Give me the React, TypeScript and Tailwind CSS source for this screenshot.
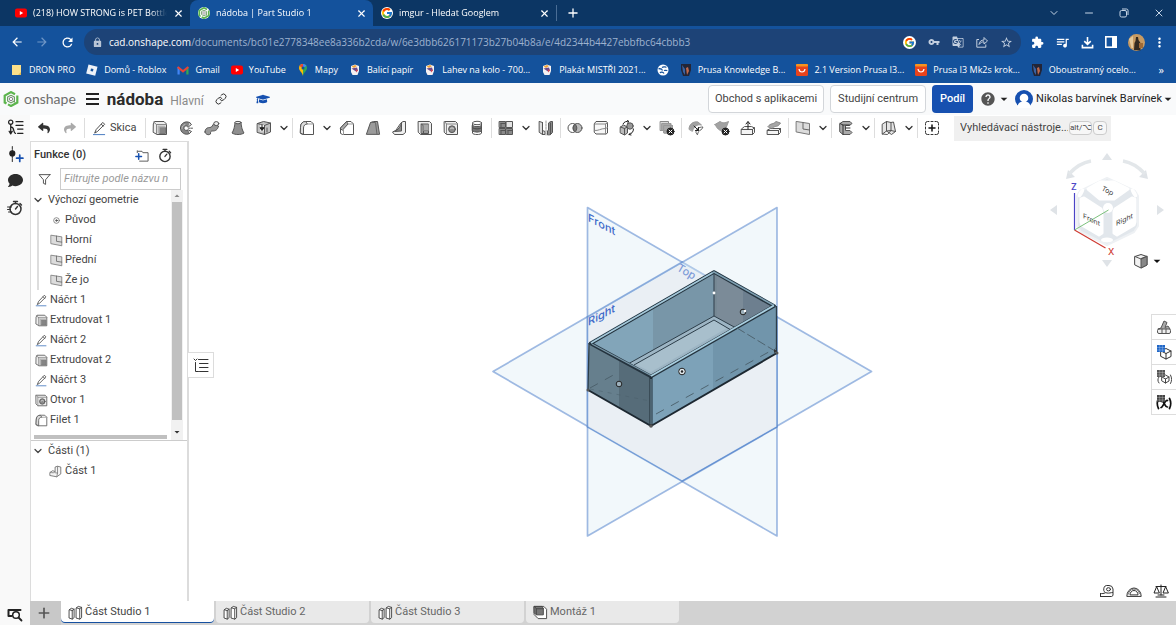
import React from "react";
import { FcGoogle } from "react-icons/fc";
import { FaYoutube, FaGraduationCap, FaReply, FaShare, FaComment } from "react-icons/fa";
import {
  MdArrowBack, MdArrowForward, MdRefresh, MdLock, MdStarBorder, MdVpnKey, MdGTranslate,
  MdExtension, MdQueueMusic, MdMoreVert, MdHelp, MdArrowDropDown,
} from "react-icons/md";
import { FiFilter } from "react-icons/fi";
import { ChevronDown, Link, Plus, X, Minus } from "lucide-react";

type Kids = { children?: React.ReactNode };

/* ---------- icon primitives ---------- */

function Glyph({ children, className = "size-4" }: Kids & { className?: string }) {
  return (
    <svg viewBox="0 0 16 16" className={`${className} shrink-0`} fill="none" stroke="#555" strokeWidth="1" strokeLinejoin="round" strokeLinecap="round" aria-hidden="true">
      {children}
    </svg>
  );
}

const G = "#a9a9a9";
const L = "#dcdcdc";

const Extrude = ({ className }: { className?: string }) => (
  <Glyph className={className}>
    <path d="M1.500 3.500l1-2h9.500l2.500 2.500v10.500h-9.500l-3.500-2z" fill="#eee" />
    <path d="M1.500 2l3 2.500M4.500 4.500h10M4.500 4.500v10" stroke="#888" />
    <path d="M7.500 7.500h6v6h-6z" fill="#858585" stroke="#777" />
    <path d="M5.500 5.500h8v2h-6v6h-2z" fill="#b5b5b5" stroke="none" />
  </Glyph>
);
const Revolve = () => (
  <Glyph>
    <path d="M11.500 2.500a6.200 6.200 0 1 0 0 11l-2-3.500a2.300 2.300 0 1 1 0-3.800z" fill="#858585" />
    <path d="M11.500 2.500l2 2-3.500 2.700M11.500 13.500l2-2-3.500-1.800" fill={L} />
    <path d="M10.500 8.200h4.500" strokeDasharray="1.500 1" />
    <path d="M7 4.500c-2 .5-3 2-3 4" stroke="#bbb" />
  </Glyph>
);
const Sweep = () => (
  <Glyph>
    <path d="M1 12c0-4 3-4.500 5-4.500S8.500 5 10 3.500l4.500 2.500c-1 4-3 5-6 5-2 0-2 1-2 3-2 1.500-5 .5-5.500-2z" fill="#999" />
    <ellipse cx="12.300" cy="3.600" rx="2.500" ry="2" fill="#eee" />
  </Glyph>
);
const Loft = () => (
  <Glyph>
    <path d="M5 2.500C4.500 8 3.500 10.500 2 13c3 2 9 2 12 0-1.500-2.500-2.500-5-3-10.500z" fill="#8f8f8f" />
    <ellipse cx="8" cy="2.600" rx="3" ry="1.200" fill="#eee" />
  </Glyph>
);
const Thicken = () => (
  <Glyph>
    <path d="M1.500 3.500l6-2 7 1.500v9l-6 2.500-7-2z" fill="#c2c2c2" />
    <path d="M1.500 3.500l7 2v9M8.500 5.500l6-2.500M11 8v4" />
    <path d="M4 4.800h4v6.500H4z" fill="#eee" stroke="none" />
    <path d="M6 5v4.500M4.200 8L6 10.500 7.800 8z" stroke="#222" fill="#222" />
  </Glyph>
);
const Fillet = ({ className }: { className?: string }) => (
  <Glyph className={className}>
    <path d="M1.500 13V7c0-3.500 2-5.500 5-5.500h5.500l2.500 2.500v10.500H4z" fill="#fff" />
    <path d="M1.500 7c0-3.500 2-5.500 5-5.500l2 2.500C6 4 4.500 5.500 4.500 8v6.500l-3-1.500z" fill={L} />
    <path d="M8.500 4h6" stroke="#999" />
  </Glyph>
);
const Chamfer = () => (
  <Glyph>
    <path d="M1.500 13V8l6-6.500h4.500l2.500 2.500v10.500H4z" fill="#fff" />
    <path d="M1.500 8l6-6.500L9 4 4.500 9l-1 1z" fill={G} />
    <path d="M9 4h5.500M4.500 9v5.500" stroke="#999" />
  </Glyph>
);
const Draft = () => (
  <Glyph>
    <path d="M1.500 14l4-11.500 3-1h4L14.500 14z" fill="#9b9b9b" />
    <path d="M5.500 2.500h5L12 14.500" stroke="#666" />
  </Glyph>
);
const Rib = () => (
  <Glyph>
    <path d="M10 3l2-1.500h2.500v11L12 14.500H3.500L1.500 12l3-1.500z" fill="#eee" />
    <path d="M10.500 3v8l-7 .5C7 10 9.500 7 10.500 3z" fill="#8a8a8a" />
  </Glyph>
);
const Shell = () => (
  <Glyph>
    <path d="M1.500 1.500h11l2 2v11h-11l-2-2z" fill="#eee" />
    <path d="M4.500 4h7v9.500h-7z" fill="#999" />
    <path d="M4.500 4l2 2v7" />
    <path d="M6.500 4.500h5v6h-5z" fill={G} stroke="#888" />
  </Glyph>
);
const Hole = ({ className }: { className?: string }) => (
  <Glyph className={className}>
    <path d="M1.500 1.500h11l2 2v11h-11l-2-2z" fill="#eee" />
    <path d="M1.500 1.500l2 2.500h11M3.500 4v10.500" stroke="#888" />
    <circle cx="9" cy="9.200" r="3.400" fill="#8b8b8b" />
    <path d="M7.500 8.500a2 2 0 0 1 3 0" stroke="#ddd" />
  </Glyph>
);
const Thread = () => (
  <Glyph>
    <path d="M3.500 3v10c0 2 9 2 9 0V3" fill="#fff" />
    <path d="M3.500 5.500c2 1.500 7 1.500 9 0v5.500c-2 1.500-7 1.500-9 0z" fill="#777" />
    <ellipse cx="8" cy="3" rx="4.500" ry="1.700" fill="#fff" />
    <path d="M4 8c2 1.300 6 1.300 8 0" stroke="#444" />
  </Glyph>
);
const Pattern = () => (
  <Glyph>
    <path d="M1.500 1.500h6v6h-6zM1.500 8.500h6v6h-6zM8.500 8.500h6v6h-6z" fill="#8a8a8a" />
    <path d="M8.500 1.500h6v6h-6z" fill="#e3e3e3" />
    <path d="M3 3.500h4.500M3 10.500h4.500M10 10.500h4.500M3 3.500v4M3 10.500v4M10 10.500v4" stroke="#555" />
  </Glyph>
);
const Mirror = () => (
  <Glyph>
    <path d="M1.500 1.500l3 1v8l2.500 1v3H4.500l-3-2z" fill={L} />
    <path d="M9.500 14.500V11l1-1V3l2-1.500h2v11l-2 2z" fill="#8a8a8a" />
    <path d="M4.500 2.500v12M12.500 3v11.500" />
    <path d="M8 1v14" stroke="#999" strokeDasharray="2 1" />
  </Glyph>
);
const BooleanIcon = () => (
  <Glyph>
    <circle cx="5.500" cy="8" r="4.500" fill="#fff" />
    <circle cx="10.500" cy="8" r="4.500" fill="#bbb" />
    <path d="M8 4.300a4.500 4.500 0 0 1 0 7.400 4.500 4.500 0 0 1 0-7.400z" fill="#777" />
  </Glyph>
);
const Split = () => (
  <Glyph>
    <path d="M1.500 3.500l1.500-2h10.500l1 1.500v10l-1.500 1H3l-1.500-1.500z" fill="#f8f8f8" />
    <path d="M2 4h10.500l2-1M12.500 4v10M1.500 10.500c4 .5 6-2 11-2l2-1" stroke="#888" />
  </Glyph>
);
const Transform = () => (
  <Glyph>
    <path d="M1.500 7l3-2 4 2v6l-3 2-4-2z" fill="#bbb" />
    <path d="M1.500 7l4 1.500v6M5.500 8.500l3-1.500" />
    <circle cx="11" cy="6" r="3.200" fill="#999" />
    <path d="M4 4C5 1.500 8 1 9.500 1.500M8.500.5l1.500 1-1.500 1.500M14.500 9c0 3-2 5-4.500 5.500M11.500 13l-1.500 1.500 2 .5" stroke="#222" />
  </Glyph>
);
const Cross = () => (
  <>
    <circle cx="11.500" cy="11.500" r="3.500" fill="#222" stroke="#222" />
    <path d="M10 10l3 3M13 10l-3 3" stroke="#fff" />
  </>
);
const DeletePart = () => (
  <Glyph>
    <path d="M1.500 1.500h8v2H12v2h1.500V13H5v-2.500H1.500z" fill={L} stroke="#888" />
    <path d="M3 3.500h8.500v7H3zM5 5.500h8.500V13H5z" fill={G} stroke="#999" />
    <Cross />
  </Glyph>
);
const MoveFace = () => (
  <Glyph>
    <path d="M1 9c0-4.500 4-8 9-7l3.500 3C9 4 6 6.500 4.500 11z" fill="#a2a2a2" stroke="#999" />
    <path d="M8 12c0-3 2.500-5 7-5l-1.500 2.500C11 10.500 10 12 9.500 14.500z" fill="#fff" stroke="#666" />
    <path d="M6 6l4.500 4.500M10.500 7.500v3H7.500" stroke="#222" />
  </Glyph>
);
const DeleteFace = () => (
  <Glyph>
    <path d="M1 4.500l5-3c3 2 5 1.500 8.500 0L12 8 9 11C5 11 3 8 1 4.500z" fill="#a2a2a2" stroke="#999" />
    <Cross />
  </Glyph>
);
const MoveUp = () => (
  <Glyph>
    <path d="M1.500 9l3-2.500h7L14.500 8v4.500l-2 2h-11z" fill="#f4f4f4" />
    <path d="M1.500 9.500h11l2-2M12.500 9.500v5" />
    <path d="M8 9V2M6 4l2-2.500L10 4" stroke="#222" />
  </Glyph>
);
const Replace = () => (
  <Glyph>
    <path d="M1.500 10l3-1.500h10v4l-2 2h-11z" fill="#f4f4f4" />
    <path d="M1.500 10.500h11l2-2M12.500 10.500v4" />
    <path d="M2 6.500c3-4 5-1.500 8-5l4.500 1.500c-3 5-5 2-8 5z" fill="#a6a6a6" stroke="#888" />
  </Glyph>
);
const PlaneIcon = ({ className }: { className?: string }) => (
  <Glyph className={className}>
    <path d="M1.500 1.500l13 2v11l-13-2.500z" fill={L} stroke="#777" />
    <path d="M8 2.500v6.500l6.500 1" stroke="#666" />
  </Glyph>
);
const Frame = () => (
  <Glyph>
    <path d="M2 3.500L5 1.500h7l2 2-2.500 2H7.500v5H12l2 2-2 2H5L2 12z" fill="#aaa" />
    <path d="M2 3.500l3 1.500v9.500M5 5h6.500M7.500 8h4.500" stroke="#333" />
  </Glyph>
);
const Sheet = () => (
  <Glyph>
    <path d="M1.500 4l4-2.500v9.500l-4 3zM5.500 1.500L10 2.500v8l-4.500.5M10 2.500l2.500-.5 2 9.500-4 3-5-3.500" fill="#e4e4e4" />
    <path d="M10 10.500l4.500 1M1.500 14l5 .5 3.500-4" />
  </Glyph>
);
const AddTool = () => (
  <Glyph>
    <path d="M1.500 5V3.500a2 2 0 0 1 2-2H5M11 1.500h1.500a2 2 0 0 1 2 2V5M14.500 11v1.500a2 2 0 0 1-2 2H11M5 14.500H3.500a2 2 0 0 1-2-2V11M7 1.500h2M7 14.500h2M1.500 7v2M14.500 7v2" stroke="#333" />
    <path d="M8 5v6M5 8h6" stroke="#111" strokeWidth="1.500" />
  </Glyph>
);
const Pencil = ({ className }: { className?: string }) => (
  <Glyph className={className}>
    <path d="M3 12.500l1.500-3.500 7-7.500 2 2-7.500 7.500zM10 3.500l2 2" stroke="#444" />
    <path d="M1.500 14.500h12" stroke="#3f74bd" />
  </Glyph>
);
const PartTab = ({ className }: { className?: string }) => (
  <Glyph className={className}>
    <path d="M1.500 5l2-1.500 3 1v9L4.500 15l-3-1zM9 3l2-1.500 3.500 1v11l-2 1.500L9 14z" fill="#fff" stroke="#444" />
    <path d="M1.500 5l3 1v9M4.500 6l2-1.500M9 3l3.500 1v11M12.500 4l2-1.500" stroke="#444" />
  </Glyph>
);
const AssemblyTab = ({ className }: { className?: string }) => (
  <Glyph className={className}>
    <path d="M1.500 1.500h10l3 3v10h-9l-4-4z" fill="#fff" stroke="#444" />
    <path d="M1.500 1.500h8l1.500 2v7H3.500l-2-2z" fill="#777" stroke="#444" />
    <path d="M1.500 1.500l2 2.500H11M3.500 4v6" stroke="#444" />
  </Glyph>
);
const PartIcon = ({ className }: { className?: string }) => (
  <Glyph className={className}>
    <path d="M1.500 9l3-2 3 1V2.500l3-1 4 1V11l-5 3.500-8-1.500z" fill="#f4f4f4" stroke="#666" />
    <path d="M7.500 8c-.5 2-3 2-6 1M10.500 2v8l-1 4.500M10.500 10l-3-.5" stroke="#777" />
  </Glyph>
);
const OnshapeMark = ({ className }: { className?: string }) => (
  <svg viewBox="0 0 16 16" className={`${className} shrink-0`} fill="none" aria-hidden="true">
    <path d="M12 3.200L8 1.100 1.700 4.600v6.900l1.800 1M5 13.400l3 1.600 6.300-3.500V4.600" stroke="#5cb54d" strokeWidth="2.200" />
    <path d="M8 4.200l3.400 1.900v5.500M11.200 10L8 11.900 4.600 9.900V6.100L8 4.200" stroke="#6f9d68" strokeWidth="1.200" />
    <circle cx="8" cy="8" r="1.700" stroke="#888" />
  </svg>
);

/* ---------- browser chrome ---------- */

function BrowserTab({ icon, title, active }: { icon: React.ReactNode; title: string; active?: boolean }) {
  return (
    <div className={`flex h-[26px] w-[183px] items-center gap-[6px] pl-[8px] pr-[6px] ${active ? "rounded-t-lg bg-[#14529c]" : ""}`}>
      {icon}
      <span className="flex-1 overflow-hidden whitespace-nowrap text-[9px] text-white [mask-image:linear-gradient(90deg,#000_88%,transparent)]">{title}</span>
      <button aria-label={`Zavřít ${title}`} className="text-white"><X className="size-[11px]" strokeWidth={2.500} /></button>
    </div>
  );
}

const FavRoblox = (
  <svg viewBox="0 0 12 12" className="size-3 shrink-0" aria-hidden="true"><path d="M2.500.5l9 2.300-2.300 9-9-2.300z" fill="#eef2f8" /><path d="M5 4.500l2.500.6L6.900 7.500l-2.400-.6z" fill="#14529c" /></svg>
);
const FavGmail = (
  <svg viewBox="0 0 12 12" className="size-3 shrink-0" aria-hidden="true"><path d="M.5 2.500v8h2.200V6z" fill="#4285f4" /><path d="M11.500 2.500v8H9.300V6z" fill="#34a853" /><path d="M.7 3L6 7.300 11.300 3" stroke="#ea4335" strokeWidth="2.200" fill="none" /></svg>
);
const FavMaps = (
  <svg viewBox="0 0 12 12" className="size-3 shrink-0" aria-hidden="true"><path d="M6 0a4 4 0 0 0-4 4c0 3 3.300 4 4 8z" fill="#fbbc04" /><path d="M6 0a4 4 0 0 1 4 4c0 3-3.300 4-4 8z" fill="#34a853" /><path d="M6 0a4 4 0 0 0-3.500 2L6 4z" fill="#ea4335" /><path d="M6 0a4 4 0 0 1 3.500 2L6 4z" fill="#4285f4" /><circle cx="6" cy="4" r="1.500" fill="#14529c" /></svg>
);
const FavShield = (
  <svg viewBox="0 0 12 12" className="size-3 shrink-0" aria-hidden="true"><path d="M2 2L6 .5 10 2v5L8.500 11h-5L2 8z" fill="#f5f1f2" /><path d="M2.500 2.500L6 1l2 1-3 2z" fill="#f0a43a" /><path d="M2.500 4.500L8 3.500l1 3-2 1z" fill="#6a4a8c" /><path d="M6.500 5.500L9 6 7.500 8.500z" fill="#d8434e" /></svg>
);
const FavGlobe = (
  <svg viewBox="0 0 12 12" className="size-3 shrink-0" aria-hidden="true"><circle cx="6" cy="6" r="5.500" fill="#fff" /><path d="M1.500 4.500l3 .5 1 1.500M5 3.500c2-1.500 3 0 4.500-.5M7 6.500c1.500-.5 3 0 3 .5M3 9c1-1.500 3-1 4 .5" stroke="#14529c" strokeWidth="1.300" fill="none" /></svg>
);
const FavPrusa = (
  <svg viewBox="0 0 12 12" className="size-3 shrink-0" aria-hidden="true"><path d="M1 0h10v6l-2 6H3L1 6z" fill="#232536" /><path d="M2 1l3 4v6L3 8z" fill="#3a62a0" /><path d="M6 4l2-1 1 4-2 4z" fill="#c1694c" /></svg>
);
const FavAli = (
  <svg viewBox="0 0 12 12" className="size-3 shrink-0" aria-hidden="true"><rect width="12" height="12" rx="1.500" fill="#e8431c" /><rect width="12" height="2.500" rx="1" fill="#f6931e" /><path d="M3 5c.5 4 5.500 4 6 0" stroke="#fff" strokeWidth="1.200" fill="none" /></svg>
);
const FavNote = (
  <svg viewBox="0 0 12 12" className="size-3 shrink-0" aria-hidden="true"><path d="M1 1h9v10H1z" fill="#fbe08a" /><path d="M10 8v3H7z" fill="#e2b950" /></svg>
);
const TubeIcon = (
  <svg viewBox="0 0 12 12" className="size-3 shrink-0" aria-hidden="true"><rect y="1.500" width="12" height="9" rx="2" fill="#f00" /><path d="M4.800 4l3.400 2-3.400 2z" fill="#fff" /></svg>
);

const bookmarks: { icon: React.ReactNode; label: string }[] = [
  { icon: FavNote, label: "DRON PRO" },
  { icon: FavRoblox, label: "Domů - Roblox" },
  { icon: FavGmail, label: "Gmail" },
  { icon: TubeIcon, label: "YouTube" },
  { icon: FavMaps, label: "Mapy" },
  { icon: FavShield, label: "Balicí papír" },
  { icon: FavShield, label: "Lahev na kolo - 700..." },
  { icon: FavShield, label: "Plakát MISTŘI 2021..." },
  { icon: FavGlobe, label: "" },
  { icon: FavPrusa, label: "Prusa Knowledge B..." },
  { icon: FavAli, label: "2.1 Version Prusa I3..." },
  { icon: FavAli, label: "Prusa I3 Mk2s krok..." },
  { icon: FavPrusa, label: "Oboustranný ocelo..." },
];

function BrowserChrome() {
  return (
    <div className="bg-[#14529c] font-['Open_Sans','Noto_Sans',sans-serif] text-white">
      <div className="flex h-[26px] items-center bg-[#0c3664] pl-[7px]">
        <BrowserTab icon={TubeIcon} title="(218) HOW STRONG is PET Bottle" />
        <BrowserTab active icon={<span className="rounded-full bg-white"><OnshapeMark className="size-3" /></span>} title="nádoba | Part Studio 1" />
        <BrowserTab icon={<span className="rounded-full bg-white"><FcGoogle className="size-3" /></span>} title="imgur - Hledat Googlem" />
        <span className="h-4 w-px bg-[#4a6d95]" />
        <button aria-label="Nová karta" className="ml-[9px]"><Plus className="size-[14px]" strokeWidth={2.200} /></button>
        <div className="ml-auto flex items-center text-[#c6d5e6]">
          <button aria-label="Hledat karty" className="flex w-[35px] justify-center"><ChevronDown className="size-3" /></button>
          <button aria-label="Minimalizovat" className="flex w-[35px] justify-center"><Minus className="size-3" /></button>
          <button aria-label="Obnovit" className="flex w-[35px] justify-center">
            <svg viewBox="0 0 10 10" className="size-[10px]" fill="none" stroke="currentColor"><rect x="1" y="2.500" width="6.500" height="6.500" rx="1.500" /><path d="M3 1h4.500A1.500 1.500 0 0 1 9 2.500V7" /></svg>
          </button>
          <button aria-label="Zavřít" className="flex w-[35px] justify-center"><X className="size-3" /></button>
        </div>
      </div>
      <div className="flex h-[32px] items-center pl-[10px] pr-[13px]">
        <div className="flex items-center gap-[11px]">
          <button aria-label="Zpět"><MdArrowBack className="size-[14px]" /></button>
          <button aria-label="Vpřed"><MdArrowForward className="size-[14px] text-[#6f96c6]" /></button>
          <button aria-label="Obnovit stránku"><MdRefresh className="size-[15px]" /></button>
        </div>
        <div className="ml-[9px] flex h-[26px] flex-1 items-center rounded-full bg-[#1d4377] pl-[8px] pr-[8px]">
          <MdLock className="size-[11px] text-[#b9c5d6]" />
          <label htmlFor="url" className="ml-[6px] text-[10px]">cad.onshape.com</label>
          <input id="url" readOnly value="/documents/bc01e2778348ee8a336b2cda/w/6e3dbb626171173b27b04b8a/e/4d2344b4427ebbfbc64cbbb3" className="min-w-0 flex-1 bg-transparent text-[10px] text-[#9db2cf] outline-none" />
          <div className="flex items-center gap-3 text-[#c3cfdf]">
            <span className="rounded-full bg-white p-px"><FcGoogle className="size-[11px]" /></span>
            <MdVpnKey className="size-3" />
            <MdGTranslate className="size-3" />
            <svg viewBox="0 0 12 12" className="size-3" fill="none" stroke="currentColor"><path d="M3 3.500H.8v7.700h9V8.500M3 8.500c.5-3 2-4.500 5-4.500V1.500L11.500 5 8 8V5.800C6 5.800 4.500 6.500 3 8.500z" /></svg>
            <MdStarBorder className="size-[13px]" />
          </div>
        </div>
        <div className="ml-[10px] flex items-center gap-[11px]">
          <MdExtension className="size-[13px]" />
          <MdQueueMusic className="size-[15px]" />
          <svg viewBox="0 0 14 14" className="size-[13px]" fill="none" stroke="#fff" strokeWidth="1.700"><path d="M7 1v7.500M3.500 5.500L7 9l3.500-3.500M1.500 9.500v3h11v-3" /></svg>
          <svg viewBox="0 0 12 12" className="size-[12px]"><rect x=".8" y=".8" width="10.400" height="10.400" stroke="#fff" strokeWidth="1.600" fill="none" /><rect x="7" y="1" width="4.500" height="10" fill="#fff" /></svg>
          <svg viewBox="0 0 17 17" className="size-[17px]"><circle cx="8.500" cy="8.500" r="8.500" fill="#c79a62" /><path d="M1 5l4-3v12H3.500z" fill="#e5c99b" /><path d="M6 16l.5-7 1-2 .5-4h2l.5 3 2 3v7.500z" fill="#33291f" /><path d="M11 9h4v5h-4z" fill="#a06a36" /></svg>
          <MdMoreVert className="-mx-1 size-[15px]" />
        </div>
      </div>
      <nav aria-label="Záložky" className="flex h-[25px] items-start gap-[11px] pl-[11px] pr-[12px] pt-[4px]">
        {bookmarks.map((b, i) => (
          <a key={i} href="#" aria-label={b.label || "Web"} className="flex h-4 shrink-0 items-center gap-[6px] whitespace-nowrap text-[9px]">
            {b.icon}
            {b.label && <span>{b.label}</span>}
          </a>
        ))}
        <button aria-label="Další záložky" className="ml-auto text-[11px] leading-4">»</button>
      </nav>
    </div>
  );
}

/* ---------- document header ---------- */

function Header() {
  return (
    <header className="flex h-[32px] items-center bg-[#f9fafb] text-[11px] text-[#333]">
      <OnshapeMark className="ml-[3px] size-4" />
      <span className="ml-[5px] font-[Lato,sans-serif] text-[14px] leading-5 text-[#6d6d6d]">onshape</span>
      <button aria-label="Nabídka" className="ml-[10px] flex flex-col gap-[3px]">
        <span className="h-[2px] w-[13px] bg-[#222]" /><span className="h-[2px] w-[13px] bg-[#222]" /><span className="h-[2px] w-[13px] bg-[#222]" />
      </button>
      <h1 className="ml-[8px] text-[17px] font-bold leading-6 text-[#2b2b2b]">nádoba</h1>
      <span className="ml-[7px] mt-[3px] text-[12px] text-[#8a8a8a]">Hlavní</span>
      <button aria-label="Odkaz" className="ml-[11px]"><Link className="size-3" strokeWidth={2} /></button>
      <button aria-label="Výuka" className="ml-[29px] text-[#1650b0]"><FaGraduationCap className="size-[14px]" /></button>
      <div className="ml-auto flex items-center">
        <button className="h-[28px] rounded border border-[#d3d6da] bg-white px-[6px] text-[#444]">Obchod s aplikacemi</button>
        <button className="ml-[6px] h-[28px] rounded border border-[#d3d6da] bg-white px-[7px] text-[#444]">Studijní centrum</button>
        <button className="ml-[6px] h-[28px] rounded bg-[#1650b0] px-[8px] font-medium text-white">Podíl</button>
        <button aria-label="Nápověda" className="ml-[7px] flex items-center text-[#555]"><MdHelp className="size-4" /><MdArrowDropDown className="size-4 text-[#222]" /></button>
        <button className="ml-[3px] flex items-center text-[#222]">
          <svg viewBox="0 0 18 18" className="size-[18px]"><circle cx="9" cy="9" r="9" fill="#1650b0" /><circle cx="9" cy="8" r="4.300" fill="#fff" /><path d="M2 18c1-6 4-6.500 7-6.500s6 .5 7 6.500z" fill="#fff" /></svg>
          <span className="ml-[3px]">Nikolas barvínek Barvínek</span>
          <MdArrowDropDown className="-ml-[2px] size-4" />
        </button>
      </div>
    </header>
  );
}

/* ---------- toolbar ---------- */

const Tool = ({ name, children }: Kids & { name: string }) => (
  <button aria-label={name} className="flex w-[26px] shrink-0 justify-center">{children}</button>
);
const More = () => (
  <button aria-label="Další nástroje" className="flex w-[14px] shrink-0 justify-center text-[#333]"><ChevronDown className="size-[12px]" strokeWidth={2.500} /></button>
);
const Sep = () => <span className="mx-px h-[20px] w-px shrink-0 bg-[#ddd]" />;

function Toolbar() {
  return (
    <div role="toolbar" aria-label="Nástroje" className="flex h-[26px] items-center bg-white pl-px text-[11px] text-[#444]">
      <Tool name="Zpět"><FaReply className="size-3 text-[#333]" /></Tool>
      <Tool name="Znovu"><FaShare className="size-3 text-[#aaa]" /></Tool>
      <Sep />
      <button className="flex w-[58px] shrink-0 items-center gap-[3px] pl-[6px]"><Pencil className="size-[15px]" />Skica</button>
      <Sep />
      <Tool name="Vysunout"><Extrude /></Tool><Tool name="Otočit"><Revolve /></Tool><Tool name="Táhnout"><Sweep /></Tool><Tool name="Loft"><Loft /></Tool><Tool name="Zesílit"><Thicken /></Tool><More />
      <Sep />
      <Tool name="Filet"><Fillet /></Tool><More /><Tool name="Zkosení"><Chamfer /></Tool><Tool name="Úkos"><Draft /></Tool><Tool name="Žebro"><Rib /></Tool><Tool name="Skořepina"><Shell /></Tool><Tool name="Otvor"><Hole /></Tool><Tool name="Závit"><Thread /></Tool>
      <Sep />
      <Tool name="Pole"><Pattern /></Tool><More /><Tool name="Zrcadlit"><Mirror /></Tool>
      <Sep />
      <Tool name="Boolean"><BooleanIcon /></Tool><Tool name="Rozdělit"><Split /></Tool><Tool name="Transformovat"><Transform /></Tool><More /><Tool name="Smazat část"><DeletePart /></Tool>
      <Sep />
      <Tool name="Upravit plochu"><MoveFace /></Tool><Tool name="Smazat plochu"><DeleteFace /></Tool><Tool name="Posunout plochu"><MoveUp /></Tool><Tool name="Nahradit plochu"><Replace /></Tool>
      <Sep />
      <Tool name="Rovina"><PlaneIcon /></Tool><More />
      <Sep />
      <Tool name="Rám"><Frame /></Tool><More />
      <Sep />
      <Tool name="Plech"><Sheet /></Tool><More />
      <Sep />
      <Tool name="Přidat nástroj"><AddTool /></Tool>
      <div className="ml-[9px] flex h-[25px] w-[157px] shrink-0 items-center gap-px bg-[#f0f0f0] pl-[6px]">
        <input aria-label="Vyhledávací nástroje" placeholder="Vyhledávací nástroje..." className="w-[108px] shrink-0 bg-transparent outline-none placeholder:text-[#444]" />
        <kbd className="shrink-0 whitespace-nowrap rounded-sm border border-[#ccc] bg-[#f7f7f7] font-[Roboto,'DejaVu_Sans',sans-serif] text-[8px] leading-3">alt/⌥</kbd>
        <kbd className="rounded-sm border border-[#ccc] bg-[#f7f7f7] px-[3px] font-[Roboto,sans-serif] text-[8px] leading-3">C</kbd>
      </div>
    </div>
  );
}

/* ---------- left side ---------- */

const Stopwatch = ({ className, lines }: { className: string; lines?: boolean }) => (
  <Glyph className={className}>
    <circle cx="8.500" cy="9" r="5.500" stroke="#333" strokeWidth="1.500" />
    <path d="M6.500 1.500h4M8.500 1.500v2M13 3.500l1.500 1.500M8.500 9l2-2.500" stroke="#333" strokeWidth="1.400" />
    {lines && <path d="M.5 7h4M.5 9.500h3M1.500 12h3" stroke="#333" />}
  </Glyph>
);

function Rail() {
  return (
    <aside className="flex w-[30px] shrink-0 flex-col items-center bg-[#f9f9f9] pb-[3px] pt-[4px]">
      <button aria-label="Verze a historie">
        <Glyph className="size-[17px]">
          <circle cx="3.500" cy="3" r="2" stroke="#222" strokeWidth="1.200" />
          <path d="M3.500 5v7.500M3.500 7.500c4 0 2 5.500 4.500 6M8.500 2.500H15M8.500 6H15M10 9.500h5M10 13.500h5M2 11.500L3.500 14l1.500-2.500" stroke="#222" strokeWidth="1.200" />
        </Glyph>
      </button>
      <button aria-label="Přidat verzi" className="mt-[10px]">
        <Glyph className="size-[17px]">
          <path d="M5 .5v15" stroke="#333" strokeDasharray="2 1" /><circle cx="5" cy="7" r="2.400" fill="#222" stroke="#222" />
          <path d="M12 8.500v6M9 11.500h6" stroke="#1650b0" strokeWidth="1.600" />
        </Glyph>
      </button>
      <button aria-label="Komentáře" className="mt-[10px]"><FaComment className="size-[15px] text-[#2b2b2b]" /></button>
      <button aria-label="Výkon" className="mt-[12px]"><Stopwatch className="size-[16px]" lines /></button>
      <button aria-label="Hledat karty" className="mt-auto">
        <Glyph className="size-4"><path d="M1.500 4h12M1.500 4v6h3" stroke="#222" strokeWidth="2" /><circle cx="9" cy="9" r="3.300" fill="#fff" stroke="#222" strokeWidth="1.500" /><path d="M11.500 11.500l3 3" stroke="#222" strokeWidth="1.800" /></Glyph>
      </button>
    </aside>
  );
}

const features: { icon: React.ReactNode; label: string }[] = [
  { icon: <Pencil className="size-[13px]" />, label: "Náčrt 1" },
  { icon: <Extrude className="size-[13px]" />, label: "Extrudovat 1" },
  { icon: <Pencil className="size-[13px]" />, label: "Náčrt 2" },
  { icon: <Extrude className="size-[13px]" />, label: "Extrudovat 2" },
  { icon: <Pencil className="size-[13px]" />, label: "Náčrt 3" },
  { icon: <Hole className="size-[13px]" />, label: "Otvor 1" },
  { icon: <Fillet className="size-[13px]" />, label: "Filet 1" },
];

function FeaturePanel() {
  return (
    <section aria-label="Funkce" className="relative flex w-[159px] shrink-0 flex-col border-l border-r-2 border-t border-[#dcdcdc] bg-white text-[11px] leading-5 text-[#444]">
      <div className="flex h-[26px] items-center pl-[3px] pr-[15px]">
        <h2 className="text-[11px] font-medium text-[#333]">Funkce (0)</h2>
        <button aria-label="Nová složka" className="ml-auto">
          <Glyph className="size-[15px]"><path d="M4 3.500h4.500l1 1.500h5.500v9H6" stroke="#555" /><path d="M3.500 3v2" stroke="#555" /><path d="M5 6v6M2 9h6" stroke="#1650b0" strokeWidth="1.600" /></Glyph>
        </button>
        <button aria-label="Časovač" className="ml-[8px]"><Stopwatch className="size-[15px]" /></button>
      </div>
      <div className="flex h-[22px] items-center pl-[7px] pr-[6px]">
        <FiFilter className="size-[13px] shrink-0 text-[#333]" strokeWidth={1.500} />
        <div className="ml-[9px] flex h-[22px] min-w-0 flex-1 items-center border border-[#ccc] pl-[3px] pr-[12px]">
          <input aria-label="Filtr" placeholder="Filtrujte podle názvu nebo typu" className="w-full min-w-0 italic outline-none placeholder:text-[#999]" />
        </div>
      </div>
      <div className="flex h-[251px] border-b border-[#ccc]">
        <div className="flex min-w-0 flex-1 flex-col">
          <button className="flex h-5 items-center gap-[4px] pl-px"><ChevronDown className="size-3" strokeWidth={2.500} />Výchozí geometrie</button>
          <ul className="ml-[6px] border-l-2 border-[#ddd] pl-[11px]">
            <li className="flex h-5 items-center gap-[2px]">
              <Glyph className="size-[13px]"><circle cx="8" cy="8" r="3.500" stroke="#777" /><circle cx="8" cy="8" r="1" fill="#555" /></Glyph>Původ
            </li>
            {["Horní", "Přední", "Že jo"].map((p) => (
              <li key={p} className="flex h-5 items-center gap-[2px]"><PlaneIcon className="size-[13px]" />{p}</li>
            ))}
          </ul>
          <ul className="pl-[4px]">
            {features.map((f) => (
              <li key={f.label} className="flex h-5 items-center gap-[2px]">{f.icon}{f.label}</li>
            ))}
          </ul>
          <div className="mb-px ml-[3px] mr-[4px] mt-auto h-1 bg-[#c0c0c0]" />
        </div>
        <div className="mr-[4px] flex w-[12px] flex-col items-center bg-[#f1f1f1]">
          <MdArrowDropDown className="size-3 rotate-180 text-[#888]" />
          <div className="w-[10px] flex-1 bg-[#c0c0c0]" />
          <MdArrowDropDown className="mt-[6px] mb-[2px] size-3 text-[#333]" />
        </div>
      </div>
      <button className="flex h-5 items-center gap-[4px] pl-px"><ChevronDown className="size-3" strokeWidth={2.500} />Části (1)</button>
      <div className="flex h-5 items-center gap-[3px] pl-[18px]"><PartIcon className="size-[13px]" />Část 1</div>
      <button aria-label="Seznam prvků" className="absolute -right-[27px] top-[210px] z-10 flex size-[26px] items-center justify-center border border-l-0 border-[#dcdcdc] bg-white">
        <Glyph className="size-4"><path d="M1 2l1.500 1.500L4 2M2.500 5.500v9h3M5.500 2.500H15M6.500 6.500H15M6.500 10.500H15M6.500 14.500H15" stroke="#333" /></Glyph>
      </button>
    </section>
  );
}

/* ---------- model view ---------- */

function Model() {
  return (
    <svg viewBox="492 206 382 331" className="h-[331px] w-[382px]" role="img" aria-label="Model nádoby">
      <g fill="#e6f1f8" fillOpacity=".5" stroke="#5384cc" strokeOpacity=".55" strokeWidth="1.700" strokeLinejoin="round">
        <path d="M493 371.500L682 262l189.500 109.500L682 481z" />
        <path d="M587.500 207.500L777 317v219L587.500 427z" />
        <path d="M777 207.500L587.500 317v219L777 427z" />
      </g>
      <path d="M588.500 318L682 264l94 54v108.500L682 480l-93.500-53.500z" fill="#e9ecf2" fillOpacity=".7" />
      <path d="M587.500 427L682 481l95-54" fill="none" stroke="#4a7dc9" strokeOpacity=".6" strokeWidth="1.300" />
      <path d="M589 342L714 270l62 35 1 48-126 73-63-36z" fill="#9db9c9" />
      <path d="M592 343l122-69v42l-86 48z" fill="#82a5b9" />
      <path d="M653 309l61-35v42l-61 35z" fill="#7896a8" />
      <path d="M714 274l58 32-36 22-22-12z" fill="#6d7f8f" />
      <path d="M714 274l29 16v34l-7 4-22-12z" fill="#7b8b98" />
      <path d="M714 316l22 12-85 47-23-11z" fill="#9db5c4" />
      <path d="M714 320l13 8-76 44-16-8z" fill="#a8bfcc" />
      <g fill="none" stroke="#2c3d49" strokeWidth="1">
        <path d="M714 274v42l-86 48M714 316l22 12M714 320l-80 45M714 320l17 10" />
        <path d="M716 274v42" stroke="#73858f" />
      </g>
      <path d="M589 342l62 35v49l-63-36z" fill="#667f8d" />
      <path d="M619 359l32 18v49l-32-18z" fill="#566c79" />
      <path d="M651 377l125-72 1 48-126 73z" fill="#7da2b8" />
      <path d="M713 341l63-36 1 48-64 37z" fill="#7195ab" />
      <g fill="none" strokeLinejoin="round">
        <path d="M590.500 343.500L714 272l60 34-123 70.500z" stroke="#24333e" strokeWidth="3.600" />
        <path d="M591 343L714 272l60 33.500" stroke="#7fa0b2" strokeWidth="1.500" />
        <path d="M591 343L712 273" stroke="#a8ccdd" strokeWidth="1.200" />
        <path d="M592 344l59 31.500" stroke="#7795a5" strokeWidth="1.400" />
        <path d="M651 376l123-70.500" stroke="#a9cfe0" strokeWidth="1.800" />
        <path d="M651 377v49" stroke="#1f2d37" strokeWidth="3" /><path d="M651 379v45" stroke="#7b9aab" strokeWidth="1" />
        <path d="M589 343l-1 47M776.500 306v47" stroke="#2c3d49" strokeWidth="1.300" />
        <path d="M588 390l63 36 126-73" stroke="#1d2831" strokeWidth="2" />
      </g>
      <g fill="none" stroke="#4a5d69" strokeWidth=".9" strokeDasharray="9 8">
        <path d="M656 414l120-66" /><path d="M737 328l38 23" strokeDasharray="9 3" /><path d="M590 388l27-15" /><path d="M590 389l60 12" strokeDasharray="4 5" strokeOpacity=".5" />
      </g>
      <circle cx="682" cy="371.500" r="3.300" fill="#e3eaee" stroke="#222" /><circle cx="682" cy="371.500" r="1.200" fill="#222" />
      <circle cx="619" cy="384" r="2.800" fill="#9db0bb" stroke="#222" />
      <circle cx="743" cy="312" r="2.800" fill="#9db0bb" stroke="#222" /><circle cx="745" cy="311" r="1.200" fill="#fff" />
      <circle cx="714" cy="293" r="1.400" fill="#fff" />
      <path d="M774 349l3 2-3 2z" fill="#333" />
      <g fill="#555"><circle cx="588" cy="390" r="1.500" /><circle cx="651" cy="426" r="1.800" /><circle cx="777" cy="353" r="1.500" /></g>
      <g fill="#3c69c9" className="font-[Inter,sans-serif] text-[11px] font-medium">
        <text transform="translate(588 221) skewY(28)">Front</text>
        <text transform="translate(588 326) skewY(-28)">Right</text>
        <text transform="translate(676 270) rotate(30)" fill="#7d9bd8">Top</text>
      </g>
    </svg>
  );
}

function ViewCube() {
  return (
    <svg viewBox="1045 150 124 120" className="absolute right-[7px] top-[9px] h-[120px] w-[124px]" role="img" aria-label="Orientace pohledu">
      <g fill="#dfe3e7">
        <path d="M1107 153l5 7h-10zM1107 267l5-7h-10zM1050 210l7-5v10zM1164 210l-7-5v10z" />
        <path d="M1066 179l2-9 7 7zM1148 179l-2-9-7 7z" />
      </g>
      <path d="M1069 174q10-11 22-13M1145 174q-10-11-22-13" stroke="#e3e7ea" strokeWidth="3.500" fill="none" />
      <path d="M1107 178l28 13 3 5v30l-4 6-27 13-26-13-4-6v-30l3-5z" fill="#e2e7ec" stroke="#eef1f4" strokeWidth="2" strokeLinejoin="round" />
      <g fill="#fff" stroke="#fff" strokeWidth="3" strokeLinejoin="round">
        <path d="M1100 182h14l14 7-14 10h-14l-12-10z" />
        <path d="M1081 199l3-1 17 11 1 3v21l-3 2-17-10-1-3z" />
        <path d="M1135 199l-3-1-17 11-1 3v21l3 2 17-10 1-3z" />
      </g>
      <g fill="#fff"><ellipse cx="1081" cy="193" rx="2" ry="5" transform="rotate(30 1081 193)" /><ellipse cx="1134" cy="193" rx="2" ry="5" transform="rotate(-30 1134 193)" /><circle cx="1108" cy="208" r="5" /><ellipse cx="1107" cy="240" rx="6" ry="2.500" /></g>
      <path d="M1074.500 193v37" stroke="#4a44c6" strokeWidth="1.200" />
      <path d="M1074.500 230l31 18" stroke="#cf3b33" strokeWidth="1.200" />
      <path d="M1074.500 230l34-20" stroke="#7cc17c" strokeWidth="1" />
      <g className="font-[Inter,sans-serif]">
        <text x="1071" y="190" fill="#4a44c6" className="text-[9px] font-medium">Z</text>
        <text x="1108" y="255" fill="#cf3b33" className="text-[9px] font-medium">X</text>
        <g fill="#444" className="text-[7px]">
          <text transform="translate(1083 218) skewY(26)">Front</text>
          <text transform="translate(1116 226) skewY(-26)">Right</text>
          <text transform="translate(1101 190) rotate(28)">Top</text>
        </g>
      </g>
    </svg>
  );
}

const Grid = ({ fill }: { fill: string }) => (
  <><path d="M1 1h8v7H1z" fill={fill} stroke="none" /><path d="M1 3.500h8M1 6h8M3.700 1v7M6.400 1v7" stroke="#fff" strokeOpacity=".5" strokeWidth=".5" /></>
);
const Cube = () => <path d="M5 7l5-2.500L15 7v5.500L10 15l-5-2.500zM5 7l5 2.500L15 7M10 9.500V15" fill="#fff" stroke="#333" />;

function Canvas() {
  const cell = "flex h-[25px] w-6 items-center justify-center border-b border-[#ddd]";
  return (
    <main className="relative flex min-h-[331px] min-w-0 flex-1 items-center justify-center overflow-hidden bg-white">
      <Model />
      <ViewCube />
      <button aria-label="Styl zobrazení" className="absolute right-[11px] top-[112px] flex items-center">
        <Glyph className="size-4"><path d="M2 3.500l6-2 6 2v8.500l-6 3-6-3z" fill="#f2f2f2" stroke="#444" /><path d="M8 6v9l6-3V3.500z" fill="#888" /><path d="M2 3.500L8 6l6-2.500" /></Glyph>
        <MdArrowDropDown className="size-4 text-[#111]" />
      </button>
      <div className="absolute right-0 top-[173px] flex flex-col border-l border-t border-[#ddd] bg-white">
        <button aria-label="Vzhledy" className={cell}><Glyph><path d="M2 10l3-1 3-7 3 1.500-2 5 3-1.500 2 3" fill={G} /><rect x="1.500" y="10" width="13" height="4.500" rx="1.500" fill="#eee" /><path d="M6 10v4.500M10 10v4.500" /></Glyph></button>
        <button aria-label="Konfigurace" className={cell}><Glyph><Cube /><Grid fill="#1f66c7" /></Glyph></button>
        <button aria-label="Vlastnosti" className={cell}><Glyph><path d="M6 8l3.500-2L13 8v4l-3.500 2L6 12zM6 8l3.500 2L13 8M9.500 10v4M3 8c-1.500 2-1.500 4 0 6M14.500 6c1.500 3 1.500 6 0 8.500" stroke="#444" /><Grid fill="#555" /></Glyph></button>
        <button aria-label="Proměnné" className={cell}><Glyph><path d="M2.500 4.500c-1.500 3-1.500 7 0 10M13.500 4.500c1.500 3 1.500 7 0 10M5 13.500c2 0 4-8 6.500-7M5.500 7.500c3-1 3 6 6 5.500" stroke="#111" strokeWidth="1.700" /><Grid fill="#444" /></Glyph></button>
      </div>
      <div className="absolute bottom-[2px] right-[7px] flex gap-[11px]">
        <button aria-label="Změřit"><Glyph><path d="M1.500 10.500c2 .3 3 0 4.500-.5M1.500 13.500h11l1.500-1V6a4 4 0 0 0-4-3.500H9A3.700 3.700 0 0 0 8 10c2 .5 4-.5 5.500-.5M1.500 10.500v3" stroke="#333" /><ellipse cx="9.500" cy="6.300" rx="2" ry="1.600" stroke="#333" /></Glyph></button>
        <button aria-label="Úhloměr"><Glyph><path d="M.8 13a7.200 8 0 0 1 14.400 0zM4 11.500a4 4 0 0 1 8 0z" stroke="#333" /><path d="M2.500 11a5.600 6 0 0 1 11 0" stroke="#555" strokeDasharray="1 1" /></Glyph></button>
        <button aria-label="Hmotnost"><Glyph><path d="M8 2v10M3 3.500h10M3 14h10M5 12h6M3.500 4l-2.500 6h5zM12.500 4L10 10h5z" stroke="#222" /></Glyph></button>
      </div>
    </main>
  );
}

function StudioTabs() {
  const tabs = [
    { label: "Část Studio 1", active: true },
    { label: "Část Studio 2" },
    { label: "Část Studio 3" },
    { label: "Montáž 1", assembly: true },
  ];
  return (
    <div role="tablist" className="flex h-[24px] items-start gap-[2px] bg-[#d2d2d2] text-[11px]">
      <button aria-label="Přidat kartu" className="-mr-[2px] flex h-full w-[31px] items-center justify-center bg-[#c8c8c8] pr-[4px] text-[#555]"><Plus className="size-4" strokeWidth={2.500} /></button>
      {tabs.map((t) => (
        <button key={t.label} role="tab" aria-selected={!!t.active} className={`flex h-[22px] w-[153px] items-center gap-[2px] rounded-b pl-[7px] ${t.active ? "bg-white text-[#444] shadow-[inset_0_-1px_0_#1650a0]" : "bg-[#e9e9e9] text-[#666]"}`}>
          {t.assembly ? <AssemblyTab className="size-[15px]" /> : <PartTab className="size-[15px]" />}
          {t.label}
        </button>
      ))}
    </div>
  );
}

export default function App() {
  return (
    <div className="flex min-h-screen flex-col overflow-hidden bg-white font-[Roboto,'Noto_Sans',sans-serif]">
      <BrowserChrome />
      <Header />
      <div className="flex flex-1">
        <Rail />
        <div className="flex min-w-0 flex-1 flex-col">
          <Toolbar />
          <div className="flex flex-1">
            <FeaturePanel />
            <Canvas />
          </div>
          <StudioTabs />
        </div>
      </div>
    </div>
  );
}
